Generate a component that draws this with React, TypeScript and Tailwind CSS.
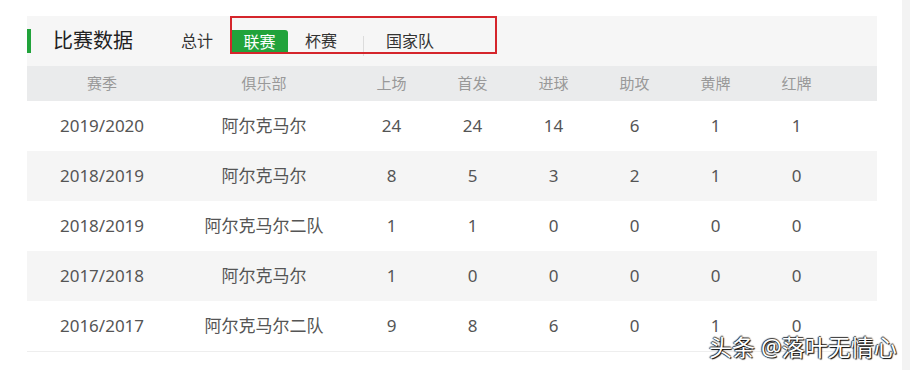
import React from 'react';

const font = { fontFamily: '"Noto Sans", "Noto Sans CJK SC", sans-serif' };

const columns = ['赛季', '俱乐部', '上场', '首发', '进球', '助攻', '黄牌', '红牌'];

const rows = [
  ['2019/2020', '阿尔克马尔', '24', '24', '14', '6', '1', '1'],
  ['2018/2019', '阿尔克马尔', '8', '5', '3', '2', '1', '0'],
  ['2018/2019', '阿尔克马尔二队', '1', '1', '0', '0', '0', '0'],
  ['2017/2018', '阿尔克马尔', '1', '0', '0', '0', '0', '0'],
  ['2016/2017', '阿尔克马尔二队', '9', '8', '6', '0', '1', '0'],
];

// column widths: season, club, then six stat columns
const widths = ['w-[150px]', 'w-[174px]', 'w-[81px]', 'w-[81px]', 'w-[81px]', 'w-[81px]', 'w-[81px]', 'w-[81px]'];

const App = () => {
  return (
    <div className="flex min-h-[370px] bg-white" style={font}>
      <div className="relative w-[902px] pt-4 pl-[27px]">
        <div className="w-[850px]">
          {/* Header with tabs */}
          <div className="relative flex h-[50px] items-center bg-[#f6f6f6]">
            <div className="h-6 w-1 bg-[#21a33b]" />
            <h2 className="ml-[22px] text-[20px] leading-6 text-[#222]">比赛数据</h2>
            <span className="ml-12 text-base leading-6 text-[#333]">总计</span>
            <span className="ml-[18px] mt-[1px] flex h-[23px] w-[57px] items-center justify-center rounded-tr-[3px] bg-[#21a33b] text-base text-white">
              联赛
            </span>
            <span className="ml-[17px] text-base leading-6 text-[#333]">杯赛</span>
            <div className="ml-[26px] mt-[10px] h-5 w-px bg-[#dcdcdc]" />
            <span className="ml-[22px] text-base leading-6 text-[#333]">国家队</span>

            {/* red annotation box */}
            <div className="absolute left-[203px] top-0 h-[38px] w-[267px] border-2 border-[#d5252b]" />
          </div>

          {/* Column headings */}
          <div className="flex h-[35px] items-center bg-[#eaebec] text-[15px] text-[#999]">
            {columns.map((c, i) => (
              <div key={c} className={`${widths[i]} text-center`}>
                {c}
              </div>
            ))}
          </div>

          {/* Rows */}
          <div className="border-b border-[#eeeeee]">
            {rows.map((r, ri) => (
              <div
                key={ri}
                className={`flex h-[50px] items-center text-[17px] text-[#555] ${ri % 2 === 1 ? 'bg-[#f5f5f5]' : 'bg-white'}`}
              >
                {r.map((cell, ci) => (
                  <div key={ci} className={`${widths[ci]} text-center`}>
                    {cell}
                  </div>
                ))}
              </div>
            ))}
          </div>
        </div>

        {/* watermark */}
        <div className="absolute left-[709px] top-[333px] text-[23px] leading-7 text-white [text-shadow:1px_1px_1px_#000,-1px_0_1px_#333,0_-1px_1px_#333]">
          头条 @落叶无情心
        </div>
      </div>
      <div className="flex-1 bg-[#f3f3f3]" />
    </div>
  );
};

export default App;
